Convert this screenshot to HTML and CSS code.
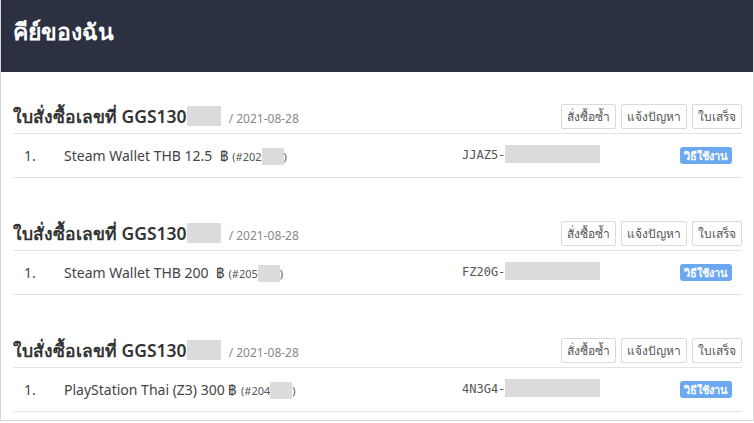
FILE: index.html
```html
<!DOCTYPE html>
<html lang="th">

<head>
    <meta charset="UTF-8" />
    <meta name="viewport" content="width=device-width, initial-scale=1.0" />
    <title>คีย์ของฉัน</title>
    <link rel="stylesheet" href="styles.css">
</head>

<body>
    <div class="card">
        <header>
            <h1>คีย์ของฉัน</h1>
        </header>

        <div class="content">
            <div class="order">
                <div class="order-head">
                    <h2>ใบสั่งซื้อเลขที่ GGS130<span class="mask mask-id"></span></h2>
                    <span class="date">/ 2021-08-28</span>
                    <div class="actions">
                        <button>สั่งซื้อซ้ำ</button>
                        <button>แจ้งปัญหา</button>
                        <button>ใบเสร็จ</button>
                    </div>
                </div>
                <div class="item">
                    <span class="num">1.</span>
                    <span class="name">Steam Wallet THB 12.5 &nbsp;฿ <small>(#202<span class="mask mask-sku"></span>)</small></span>
                    <span class="code">JJAZ5-<span class="mask mask-code"></span></span>
                    <span class="badge">วิธีใช้งาน</span>
                </div>
            </div>

            <div class="order">
                <div class="order-head">
                    <h2>ใบสั่งซื้อเลขที่ GGS130<span class="mask mask-id"></span></h2>
                    <span class="date">/ 2021-08-28</span>
                    <div class="actions">
                        <button>สั่งซื้อซ้ำ</button>
                        <button>แจ้งปัญหา</button>
                        <button>ใบเสร็จ</button>
                    </div>
                </div>
                <div class="item">
                    <span class="num">1.</span>
                    <span class="name">Steam Wallet THB 200 &nbsp;฿ <small>(#205<span class="mask mask-sku"></span>)</small></span>
                    <span class="code">FZ20G-<span class="mask mask-code"></span></span>
                    <span class="badge">วิธีใช้งาน</span>
                </div>
            </div>

            <div class="order">
                <div class="order-head">
                    <h2>ใบสั่งซื้อเลขที่ GGS130<span class="mask mask-id"></span></h2>
                    <span class="date">/ 2021-08-28</span>
                    <div class="actions">
                        <button>สั่งซื้อซ้ำ</button>
                        <button>แจ้งปัญหา</button>
                        <button>ใบเสร็จ</button>
                    </div>
                </div>
                <div class="item">
                    <span class="num">1.</span>
                    <span class="name">PlayStation Thai (Z3) 300 ฿ <small>(#204<span class="mask mask-sku"></span>)</small></span>
                    <span class="code">4N3G4-<span class="mask mask-code"></span></span>
                    <span class="badge">วิธีใช้งาน</span>
                </div>
            </div>
        </div>
    </div>
</body>

</html>
```

FILE: styles.css
```css
:root{
    --dark: #2c3142;
    --line: #e3e3e3;
    --mask: #dcdcdc;
    --blue: #6ba8f0;
}

*{
    margin: 0;
    padding: 0;
    box-sizing: border-box;
}
body{
    font-family: "Noto Sans", "Open Sans", sans-serif;
    color: #333;
    background-color: white;
}
.card{
    height: 421px;
    border: 1px solid #d6d6d6;
    border-top: none;
    overflow: hidden;
}
header{
    height: 72px;
    background-color: var(--dark);
    padding: 15px 12px;
}
header h1{
    color: white;
    font-size: 23px;
    font-weight: bold;
    line-height: 32px;
}
.content{
    padding: 32px 11px 0 12px;
}
.order{
    margin-bottom: 43px;
}
.order-head{
    display: flex;
    align-items: center;
    padding-bottom: 4px;
    border-bottom: 1px solid var(--line);
}
.order-head h2{
    font-size: 17.5px;
    font-weight: 600;
    line-height: 25px;
    color: #333;
}
.mask{
    display: inline-block;
    background-color: var(--mask);
    vertical-align: middle;
}
.mask-id{
    width: 34px;
    height: 20px;
    margin-top: -4px;
}
.mask-sku{
    width: 22px;
    height: 17px;
    margin-top: -3px;
}
.mask-code{
    width: 95px;
    height: 18px;
    margin-top: -3px;
}
.date{
    margin-left: 8px;
    font-size: 12px;
    color: #888;
    padding-top: 3px;
}
.actions{
    margin-left: auto;
    display: flex;
    gap: 5px;
}
.actions button{
    height: 25px;
    padding: 0 5px;
    background-color: white;
    border: 1px solid #d9d9d9;
    border-radius: 2px;
    font-family: inherit;
    font-size: 12px;
    color: #555;
}
.item{
    display: grid;
    grid-template-columns: 51px 398px 1fr auto;
    align-items: center;
    height: 44px;
    padding-right: 10px;
    border-bottom: 1px solid var(--line);
    font-size: 14px;
    color: #444;
}
.num{
    padding-left: 11px;
}
.name small{
    font-size: 11px;
    color: #555;
}
.code{
    font-family: "DejaVu Sans Mono", "Liberation Mono", monospace;
    font-size: 12px;
    color: #555;
}
.badge{
    background-color: var(--blue);
    color: white;
    font-size: 11px;
    font-weight: bold;
    line-height: 17px;
    padding: 0 4px;
    border-radius: 3px;
}
```
